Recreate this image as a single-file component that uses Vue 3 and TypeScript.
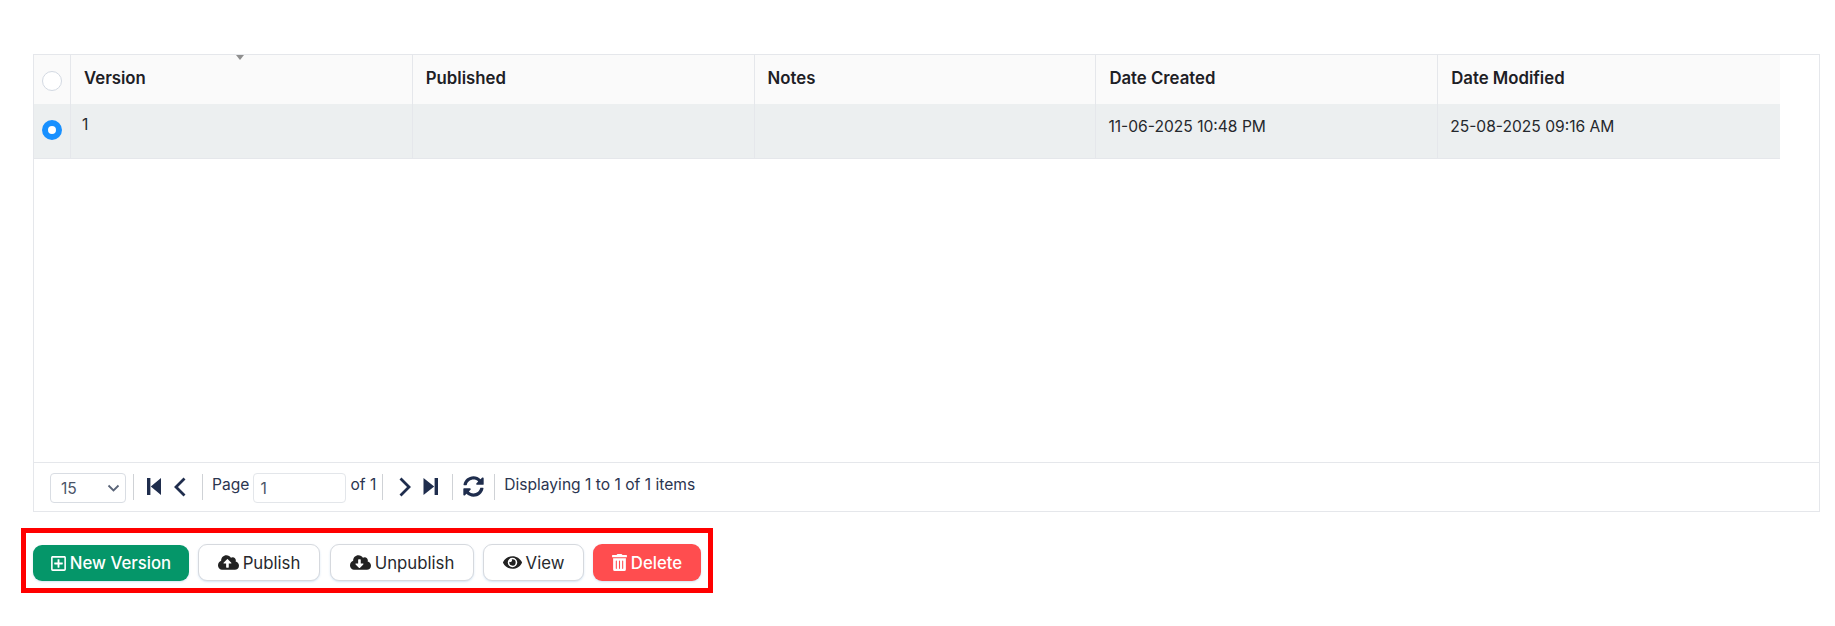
<script setup lang="ts">
const columns: string[] = ['Version', 'Published', 'Notes', 'Date Created', 'Date Modified']
const row: string[] = ['1', '', '', '11-06-2025 10:48 PM', '25-08-2025 09:16 AM']
</script>

<template>
  <div class="page">
    <section class="panel">
      <div class="view">
        <span class="sort-arrow"></span>
        <div class="grid head">
          <div class="cell check"><span class="radio"></span></div>
          <div v-for="c in columns" :key="c" class="cell hcell">{{ c }}</div>
        </div>
        <div class="grid body">
          <div class="cell check"><span class="radio on"></span></div>
          <div v-for="(c, i) in row" :key="i" class="cell bcell" :class="{ lead: i === 0 }">{{ c }}</div>
        </div>
      </div>
      <div class="pager">
        <div class="select">
          <span>15</span>
          <svg width="13" height="8" viewBox="0 0 13 8"><path d="M1.500 1.500 6.500 6.500l5-5" fill="none" stroke="#5a6478" stroke-width="1.800" /></svg>
        </div>
        <i class="sep s1"></i>
        <svg class="ic first" width="14" height="17" viewBox="0 0 14 17"><path d="M0 0h3.400v17H0zM14 0v17L3.800 8.500z" fill="#1f2d4d" /></svg>
        <svg class="ic prev" width="13" height="20" viewBox="0 0 13 20"><path d="M11.500 1.500 3 10l8.500 8.500" fill="none" stroke="#1f2d4d" stroke-width="2.800" /></svg>
        <i class="sep s2"></i>
        <span class="ptext page-label">Page</span>
        <div class="pinput">1</div>
        <span class="ptext of">of 1</span>
        <i class="sep s3"></i>
        <svg class="ic next" width="13" height="20" viewBox="0 0 13 20"><path d="M1.500 1.500 10 10l-8.500 8.500" fill="none" stroke="#1f2d4d" stroke-width="2.800" /></svg>
        <svg class="ic last" width="15" height="17" viewBox="0 0 15 17"><path d="M11.600 0H15v17h-3.400zM.5 0v17l10.700-8.500z" fill="#1f2d4d" /></svg>
        <i class="sep s4"></i>
        <svg class="ic sync" width="21" height="21" viewBox="0 0 512 512"><path fill="#1f2d4d" d="M370.72 133.28C339.458 104.008 298.888 87.962 255.848 88c-77.458.068-144.328 53.178-162.791 126.85-1.344 5.363-6.122 9.15-11.651 9.15H24.103c-7.498 0-13.194-6.807-11.807-14.176C33.933 94.924 134.813 8 256 8c66.448 0 126.791 26.136 171.315 68.685L463.03 40.97C478.149 25.851 504 36.559 504 57.941V192c0 13.255-10.745 24-24 24H345.941c-21.382 0-32.09-25.851-16.971-40.971l41.75-41.749zM32 296h134.059c21.382 0 32.09 25.851 16.971 40.971l-41.75 41.75c31.262 29.273 71.835 45.319 114.876 45.28 77.418-.07 144.315-53.144 162.787-126.849 1.344-5.363 6.122-9.15 11.651-9.15h57.304c7.498 0 13.194 6.807 11.807 14.176C478.067 417.076 377.187 504 256 504c-66.448 0-126.791-26.136-171.315-68.685L48.97 471.03C33.851 486.149 8 475.441 8 454.059V320c0-13.255 10.745-24 24-24z" /></svg>
        <i class="sep s5"></i>
        <span class="ptext info">Displaying 1 to 1 of 1 items</span>
      </div>
    </section>

    <div class="toolbar">
      <button class="btn green new">
        <svg width="15" height="17" viewBox="0 0 448 512"><path fill="#fff" d="M352 240v32c0 6.600-5.400 12-12 12h-88v88c0 6.600-5.400 12-12 12h-32c-6.600 0-12-5.400-12-12v-88h-88c-6.600 0-12-5.400-12-12v-32c0-6.600 5.400-12 12-12h88v-88c0-6.600 5.400-12 12-12h32c6.600 0 12 5.400 12 12v88h88c6.600 0 12 5.400 12 12zm96-160v352c0 26.500-21.500 48-48 48H48c-26.500 0-48-21.500-48-48V80c0-26.500 21.500-48 48-48h352c26.500 0 48 21.500 48 48zm-48 346V86c0-3.300-2.700-6-6-6H54c-3.300 0-6 2.700-6 6v340c0 3.300 2.700 6 6 6h340c3.300 0 6-2.700 6-6z" /></svg>
        New Version
      </button>
      <button class="btn plain pub">
        <svg width="21" height="17" viewBox="0 0 640 512"><path fill="#222" d="M537.600 226.600c4.100-10.700 6.400-22.400 6.400-34.600 0-53-43-96-96-96-19.700 0-38.100 6-53.300 16.200C367 64.200 315.300 32 256 32c-88.400 0-160 71.600-160 160 0 2.700.1 5.400.2 8.100C40.200 219.800 0 273.200 0 336c0 79.500 64.500 144 144 144h368c70.700 0 128-57.300 128-128 0-61.900-44-113.600-102.400-125.400zM393.400 288H328v112c0 8.800-7.200 16-16 16h-48c-8.800 0-16-7.200-16-16V288h-65.400c-14.300 0-21.400-17.200-11.300-27.300l105.400-105.400c6.200-6.200 16.400-6.200 22.600 0l105.400 105.400c10.100 10.100 2.900 27.300-11.300 27.300z" /></svg>
        Publish
      </button>
      <button class="btn plain unpub">
        <svg width="21" height="17" viewBox="0 0 640 512"><path fill="#222" d="M537.600 226.600c4.100-10.700 6.400-22.400 6.400-34.600 0-53-43-96-96-96-19.700 0-38.100 6-53.300 16.200C367 64.200 315.300 32 256 32c-88.400 0-160 71.600-160 160 0 2.700.1 5.400.2 8.100C40.200 219.800 0 273.200 0 336c0 79.500 64.500 144 144 144h368c70.700 0 128-57.300 128-128 0-61.900-44-113.600-102.400-125.400zm-132.900 88.700L299.300 420.700c-6.200 6.200-16.400 6.200-22.600 0L171.300 315.300c-10.100-10.100-2.900-27.300 11.300-27.300H248V176c0-8.800 7.200-16 16-16h48c8.800 0 16 7.200 16 16v112h65.400c14.200 0 21.400 17.200 11.300 27.300z" /></svg>
        Unpublish
      </button>
      <button class="btn plain view-btn">
        <svg width="19" height="17" viewBox="0 0 576 512"><path fill="#222" d="M572.520 241.400C518.290 135.590 410.930 64 288 64S57.680 135.640 3.480 241.410a32.350 32.350 0 0 0 0 29.190C57.710 376.410 165.070 448 288 448s230.320-71.640 284.520-177.410a32.350 32.350 0 0 0 0-29.190zM288 400a144 144 0 1 1 144-144 143.930 143.930 0 0 1-144 144zm0-240a95.310 95.310 0 0 0-25.310 3.790 47.850 47.850 0 0 1-66.900 66.900A95.780 95.780 0 1 0 288 160z" /></svg>
        View
      </button>
      <button class="btn red del">
        <svg width="15" height="17" viewBox="0 0 448 512"><path fill="#fff" d="M32 464a48 48 0 0 0 48 48h288a48 48 0 0 0 48-48V128H32zm272-256a16 16 0 0 1 32 0v224a16 16 0 0 1-32 0zm-96 0a16 16 0 0 1 32 0v224a16 16 0 0 1-32 0zm-96 0a16 16 0 0 1 32 0v224a16 16 0 0 1-32 0zM432 32H312l-9.400-18.700A24 24 0 0 0 281.100 0H166.800a23.720 23.720 0 0 0-21.400 13.300L136 32H16A16 16 0 0 0 0 48v32a16 16 0 0 0 16 16h416a16 16 0 0 0 16-16V48a16 16 0 0 0-16-16z" /></svg>
        Delete
      </button>
    </div>
  </div>
</template>

<style scoped>
.page {
  width: 1835px;
  height: 626px;
  box-sizing: border-box;
  padding: 54px 15px 0 21px;
  background: #fff;
  font-family: Inter, "Liberation Sans", sans-serif;
  overflow: hidden;
}
.panel {
  margin-left: 12px;
  height: 458px;
  box-sizing: border-box;
  border: 1px solid #e5e7eb;
  display: flex;
  flex-direction: column;
}
.view {
  position: relative;
  flex: 1;
}
.sort-arrow {
  position: absolute;
  left: 202px;
  top: 0;
  border-left: 4.500px solid transparent;
  border-right: 4.500px solid transparent;
  border-top: 5px solid #8f8f8f;
}
.grid {
  display: grid;
  grid-template-columns: 37px repeat(5, 341.800px);
  width: 1746px;
}
.head {
  height: 49px;
  background: #fafafa;
}
.body {
  height: 55px;
  background: #eceff0;
  border-bottom: 1px solid #e5e7eb;
  box-sizing: border-box;
}
.cell {
  border-right: 1px solid #e5e7eb;
  box-sizing: border-box;
}
.cell:last-child {
  border-right: 0;
}
.check {
  display: flex;
  justify-content: center;
  align-items: center;
}
.body .check {
  padding-bottom: 2px;
}
.head .check {
  padding-top: 2px;
}
.radio {
  width: 20px;
  height: 20px;
  border-radius: 50%;
  box-sizing: border-box;
  border: 1px solid #d3d9e2;
  background: #fff;
}
.radio.on {
  border: 6px solid #1890ff;
}
.hcell {
  padding: 13px 0 0 13px;
  font-size: 16.750px;
  line-height: 20px;
  font-weight: 600;
  color: #1d2025;
}
.bcell {
  padding: 13px 0 0 12px;
  font-size: 15.600px;
  line-height: 20px;
  color: #25282d;
}
.bcell.lead {
  padding: 11px 0 0 11px;
}
.pager {
  height: 49px;
  box-sizing: border-box;
  border-top: 1px solid #e5e7eb;
  padding: 10px 0 0 16px;
  display: flex;
  align-items: flex-start;
  color: #2b3550;
}
.select {
  width: 76px;
  height: 30px;
  box-sizing: border-box;
  border: 1px solid #d9dde3;
  border-radius: 4px;
  padding: 0 5px 0 10px;
  display: flex;
  align-items: center;
  justify-content: space-between;
  font-size: 15.600px;
  color: #4a5468;
}
.sep {
  display: block;
  flex: none;
  width: 1px;
  height: 26px;
  background: #cfd2d6;
  margin-top: 1px;
}
.s1 { margin-left: 7px; }
.ic { flex: none; }
.first { margin: 5px 0 0 13px; }
.prev { margin: 4px 0 0 12px; }
.s2 { margin-left: 16px; }
.ptext {
  font-size: 15.600px;
  line-height: 20px;
  color: #2b3550;
}
.page-label { margin: 2px 0 0 9px; }
.pinput {
  width: 93px;
  height: 30px;
  box-sizing: border-box;
  margin-left: 4px;
  border: 1px solid #e3e6ea;
  border-radius: 4px;
  padding: 5px 6px;
  font-size: 15.600px;
  line-height: 20px;
  color: #4a5468;
}
.of { margin: 2px 0 0 4px; }
.s3 { margin-left: 6px; }
.next { margin: 4px 0 0 16px; }
.last { margin: 5px 0 0 11px; }
.s4 { margin-left: 14px; }
.sync { margin: 3px 0 0 10px; }
.s5 { margin-left: 10px; }
.info { margin: 2px 0 0 9px; }
.toolbar {
  display: inline-flex;
  margin-top: 16px;
  box-sizing: border-box;
  height: 65px;
  border: 5px solid #ff0000;
  padding: 11px 7px 7px;
  gap: 9px;
  align-items: flex-start;
}
.btn {
  height: 37px;
  box-sizing: border-box;
  border-radius: 9px;
  font: 400 16.750px/20px Inter, "Liberation Sans", sans-serif;
  display: flex;
  align-items: center;
  justify-content: center;
  gap: 4px;
  padding: 0;
  box-shadow: 0 1px 2px rgba(120, 170, 220, 0.3);
}
.green {
  background: #059669;
  border: 0;
  color: #fff;
  font-weight: 500;
  height: 36px;
  margin-top: 1px;
}
.plain {
  background: #fff;
  border: 1px solid #d6d9de;
  color: #27292d;
}
.red {
  background: #ff4d4f;
  border: 0;
  color: #fff;
  font-weight: 500;
}
.new { width: 156px; }
.pub { width: 122px; }
.unpub { width: 144px; margin-left: 1px; }
.view-btn { width: 101px; }
.del { width: 108px; }
</style>
